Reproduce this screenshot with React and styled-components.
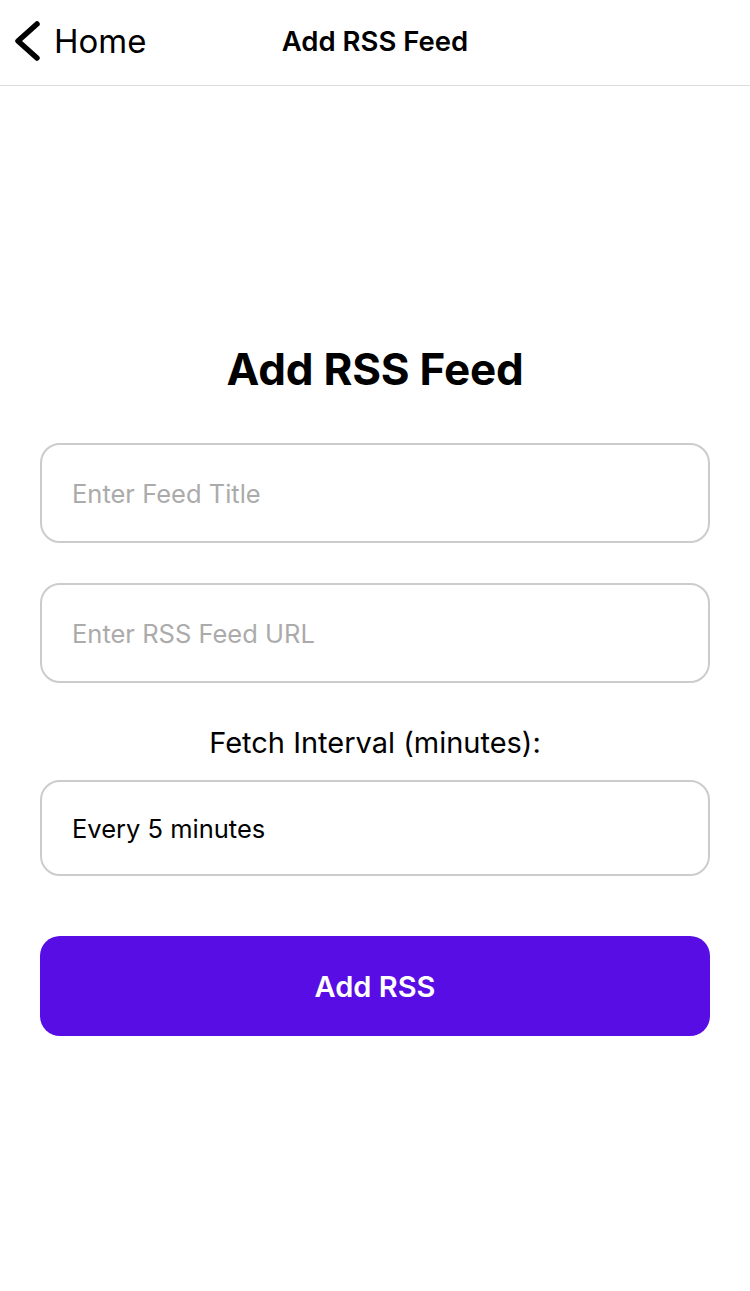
import React, { useState } from 'react';
import styled, { createGlobalStyle } from 'styled-components';

const GlobalStyle = createGlobalStyle`
  html, body {
    margin: 0;
    padding: 0;
    background: #ffffff;
  }
  body {
    font-family: Inter, "Noto Sans", "Liberation Sans", sans-serif;
    color: #000000;
  }
`;

const BORDER = '#cccccc';
const PURPLE = '#580de4';

const App = () => {
  const [title, setTitle] = useState('');
  const [url, setUrl] = useState('');

  return (
    <Page>
      <GlobalStyle />
      <Header>
        <BackButton>
          <svg width="30" height="42" viewBox="0 0 30 42" fill="none">
            <path
              d="M26 4 L7 21 L26 38"
              stroke="#000"
              strokeWidth="5.5"
              strokeLinecap="round"
              strokeLinejoin="round"
            />
          </svg>
          <BackLabel>Home</BackLabel>
        </BackButton>
        <HeaderTitle>Add RSS Feed</HeaderTitle>
      </Header>

      <Form>
        <Heading>Add RSS Feed</Heading>
        <Field
          placeholder="Enter Feed Title"
          value={title}
          onChange={(e) => setTitle(e.target.value)}
        />
        <Field
          placeholder="Enter RSS Feed URL"
          value={url}
          onChange={(e) => setUrl(e.target.value)}
        />
        <Label>Fetch Interval (minutes):</Label>
        <Picker>Every 5 minutes</Picker>
        <SubmitButton>Add RSS</SubmitButton>
      </Form>
    </Page>
  );
};

const Page = styled.div`
  width: 750px;
  min-height: 1291px;
  background: #ffffff;
`;

const Header = styled.header`
  position: relative;
  height: 85px;
  border-bottom: 1px solid #dcdcdc;
  display: flex;
  align-items: center;
  justify-content: center;
`;

const BackButton = styled.div`
  position: absolute;
  left: 11px;
  top: 20px;
  display: flex;
  align-items: center;
  gap: 13px;
`;

const BackLabel = styled.span`
  font-size: 33px;
  line-height: 42px;
  font-weight: 400;
`;

const HeaderTitle = styled.h1`
  margin: 0 0 4px;
  font-size: 27.5px;
  font-weight: 600;
`;

const Form = styled.main`
  display: flex;
  flex-direction: column;
  padding: 257px 40px 0;
`;

const Heading = styled.h2`
  margin: 0 0 48px;
  text-align: center;
  font-size: 44px;
  line-height: 52px;
  font-weight: 700;
  letter-spacing: -0.2px;
`;

const Field = styled.input`
  box-sizing: border-box;
  height: 100px;
  margin-bottom: 40px;
  padding: 0 30px;
  border: 2px solid ${BORDER};
  border-radius: 20px;
  font-family: inherit;
  font-size: 25.5px;
  color: #000;
  outline: none;

  &::placeholder {
    color: #ababab;
  }
`;

const Label = styled.div`
  margin: 2px 0 19px;
  text-align: center;
  font-size: 29px;
  line-height: 36px;
`;

const Picker = styled.div`
  box-sizing: border-box;
  height: 96px;
  display: flex;
  align-items: center;
  padding: 0 30px;
  border: 2px solid ${BORDER};
  border-radius: 20px;
  font-size: 25.5px;
`;

const SubmitButton = styled.button`
  margin-top: 60px;
  height: 100px;
  border: none;
  border-radius: 20px;
  background: ${PURPLE};
  color: #ffffff;
  font-family: inherit;
  font-size: 29px;
  font-weight: 600;
  cursor: pointer;
`;

export default App;
